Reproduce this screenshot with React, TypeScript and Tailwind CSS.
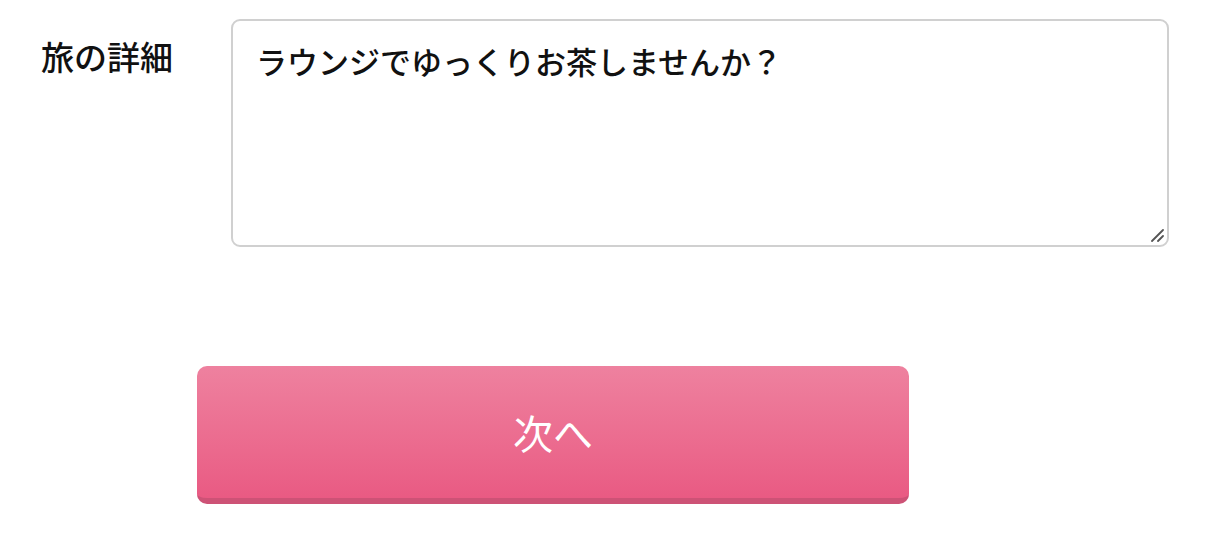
export default function App() {
  return (
    <div
      className="min-h-screen bg-white text-[#111]"
      style={{ fontFamily: '"Noto Sans CJK JP", "Noto Sans", sans-serif' }}
    >
      <div className="flex pt-[19px] pl-[41px] pr-[51px]">
        <label className="w-[190px] shrink-0 pt-[17px] text-[33px] font-medium leading-[40px]">
          旅の詳細
        </label>
        <div className="relative flex-1">
          <textarea
            className="block h-[228px] w-full resize-none rounded-[9px] border-2 border-[#d0d0d0] px-[23px] py-[19px] text-[31px] font-medium leading-[42px] text-[#111] outline-none"
            defaultValue="ラウンジでゆっくりお茶しませんか？"
          />
          <svg
            className="pointer-events-none absolute right-[5px] bottom-[5px] h-[14px] w-[14px]"
            viewBox="0 0 14 14"
          >
            <path d="M2 13 L13 2 M8 13 L13 8" stroke="#555" strokeWidth="1.8" strokeLinecap="round" />
          </svg>
        </div>
      </div>
      <div className="pt-[119px] pl-[197px]">
        <button className="h-[138px] w-[712px] rounded-[10px] border-b-[6px] border-[#cd5276] bg-gradient-to-b from-[#ee819f] to-[#e95a83] text-[40px] text-white">
          次へ
        </button>
      </div>
    </div>
  );
}
